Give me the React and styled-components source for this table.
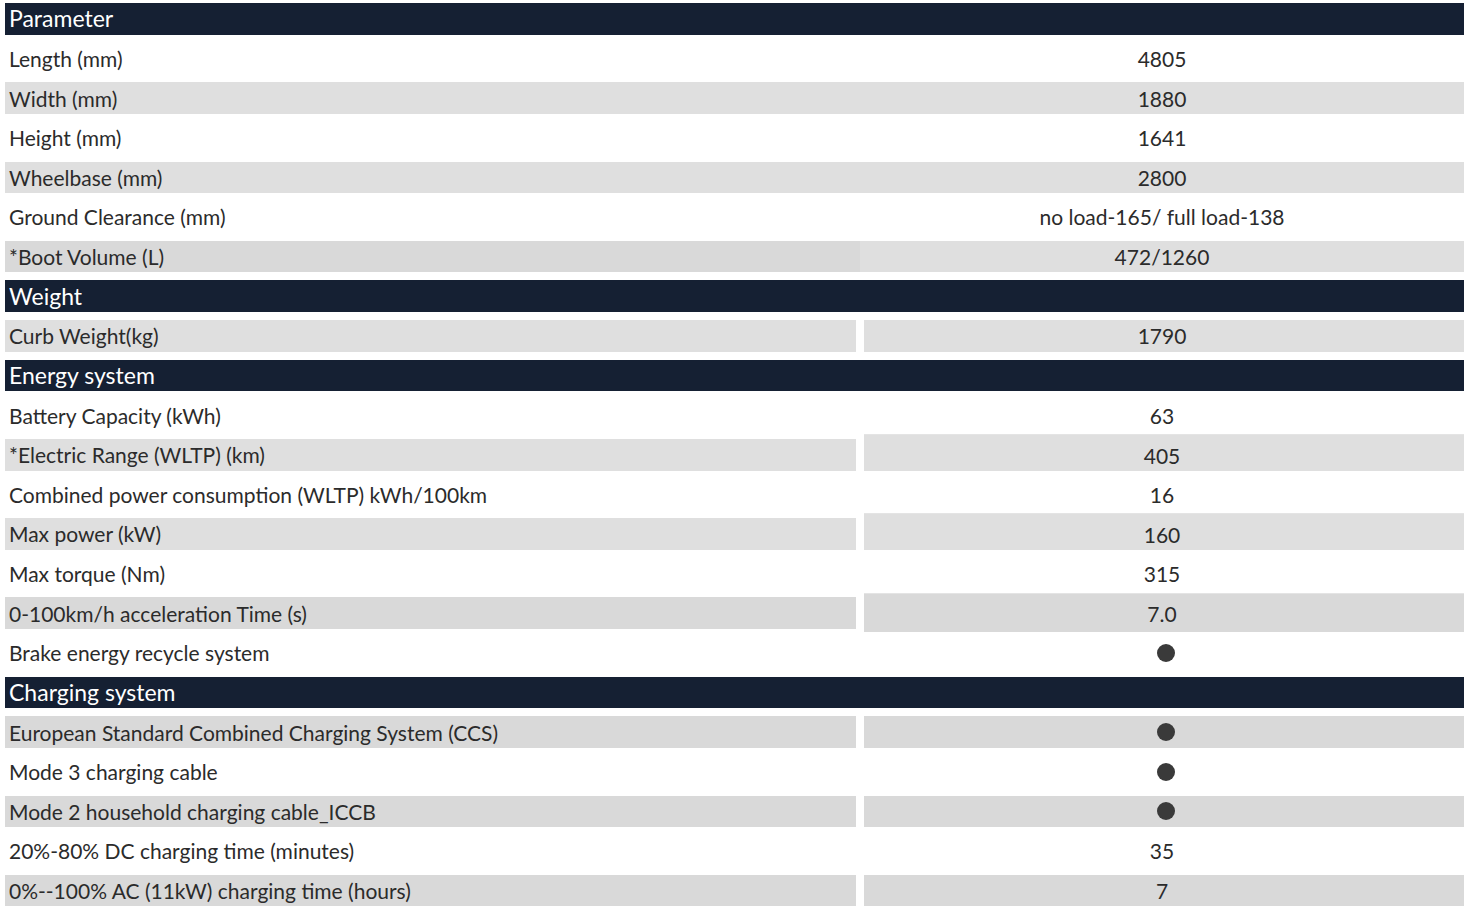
import styled, { createGlobalStyle } from 'styled-components'

const GlobalStyle = createGlobalStyle`
    body {
        margin: 0;
        background: #ffffff;
        font-family: Lato, 'Open Sans', sans-serif;
    }
`

const Dot = () => <Bullet />

const SECTIONS = [
    {
        title: 'Parameter',
        rows: [
            { label: 'Length (mm)', value: '4805' },
            { label: 'Width (mm)', value: '1880', fill: 'band' },
            { label: 'Height (mm)', value: '1641' },
            { label: 'Wheelbase (mm)', value: '2800', fill: 'band' },
            { label: 'Ground Clearance (mm)', value: 'no load-165/ full load-138' },
            { label: '*Boot Volume (L)', value: '472/1260', fill: 'boot' },
        ],
    },
    {
        title: 'Weight',
        rows: [{ label: 'Curb Weight(kg)', value: '1790', fill: 'split' }],
    },
    {
        title: 'Energy system',
        rows: [
            { label: 'Battery Capacity (kWh)', value: '63' },
            { label: '*Electric Range (WLTP) (km)', value: '405', fill: 'split', lift: true },
            { label: 'Combined power consumption (WLTP) kWh/100km', value: '16' },
            { label: 'Max power (kW)', value: '160', fill: 'split', lift: true },
            { label: 'Max torque (Nm)', value: '315' },
            { label: '0-100km/h acceleration Time (s)', value: '7.0', fill: 'split', dark: true, grow: true },
            { label: 'Brake energy recycle system', dot: true },
        ],
    },
    {
        title: 'Charging system',
        rows: [
            { label: 'European Standard Combined Charging System (CCS)', dot: true, fill: 'split', dark: true },
            { label: 'Mode 3 charging cable', dot: true },
            { label: 'Mode 2 household charging cable_ICCB', dot: true, fill: 'split', dark: true },
            { label: '20%-80% DC charging time (minutes)', value: '35' },
            { label: '0%--100% AC (11kW) charging time (hours)', value: '7', fill: 'split', dark: true },
        ],
    },
]

const App = () => {
    return (
        <>
            <GlobalStyle />
            <SpecTable>
                {SECTIONS.map((section) => (
                    <Section key={section.title}>
                        <SectionHeader>{section.title}</SectionHeader>
                        {section.rows.map((row) => (
                            <Row key={row.label} $fill={row.fill}>
                                <LabelCell $fill={row.fill} $dark={row.dark}>
                                    {row.label}
                                </LabelCell>
                                <ValueCell
                                    $fill={row.fill}
                                    $dark={row.dark}
                                    $lift={row.lift}
                                    $grow={row.grow}
                                >
                                    {row.dot ? <Dot /> : row.value}
                                </ValueCell>
                            </Row>
                        ))}
                    </Section>
                ))}
            </SpecTable>
        </>
    )
}

const SpecTable = styled.div`
    display: flex;
    flex-direction: column;
    gap: 7.95px;
    width: 1459px;
    padding: 3px 0 0 5px;
`

const Section = styled.div`
    display: contents;
`

const SectionHeader = styled.div`
    height: 31.7px;
    display: flex;
    align-items: center;
    padding-left: 4px;
    background: #152033;
    color: #ffffff;
    font-size: 23px;
    line-height: 1;
`

const rowBg = (fill) => {
    if (fill === 'band' || fill === 'boot') return '#dfdfdf'
    return 'transparent'
}

const Row = styled.div`
    display: grid;
    grid-template-columns: 851px 600px;
    column-gap: 8px;
    height: 31.7px;
    background: ${(p) => rowBg(p.$fill)};
    color: #2b2b2b;
    font-size: 21px;
`

const cellBg = (p, side) => {
    if (p.$fill === 'boot') return side === 'left' ? '#d9d9d9' : 'transparent'
    if (p.$fill === 'split') return p.$dark ? '#d9d9d9' : '#dfdfdf'
    return 'transparent'
}

const LabelCell = styled.div`
    display: flex;
    align-items: center;
    padding-left: 4px;
    margin-right: ${(p) => (p.$fill === 'boot' ? '-4px' : '0')};
    white-space: nowrap;
    background: ${(p) => cellBg(p, 'left')};
`

const ValueCell = styled.div`
    display: flex;
    align-items: center;
    justify-content: center;
    padding-right: 4px;
    white-space: nowrap;
    background: ${(p) => cellBg(p, 'right')};
    margin-top: ${(p) => (p.$lift ? '-5px' : p.$grow ? '-4px' : '0')};
    margin-bottom: ${(p) => (p.$grow ? '-3px' : '0')};
    padding-top: ${(p) => (p.$lift ? '5px' : p.$grow ? '1px' : '0')};
    border-top: ${(p) => (p.$lift || p.$grow ? '1px solid #e4e4e4' : 'none')};
`

const Bullet = styled.span`
    width: 18px;
    height: 18px;
    margin-left: 8px;
    border-radius: 50%;
    background: #3a3a3a;
`

export default App
